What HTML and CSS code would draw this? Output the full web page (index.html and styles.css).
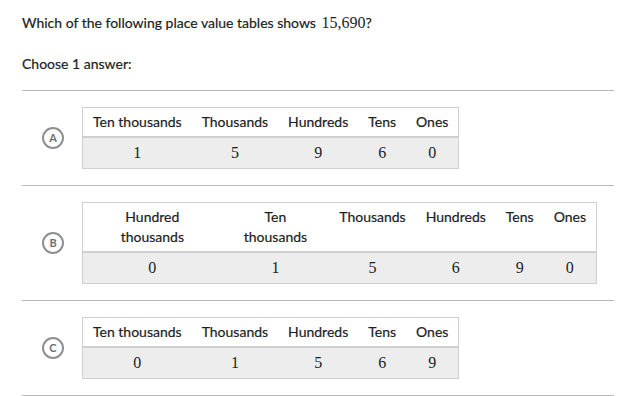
FILE: index.html
```html
<!DOCTYPE html>
<html lang="en">
<head>
  <meta charset="UTF-8">
  <title>Place value tables</title>
  <link rel="stylesheet" href="styles.css">
</head>
<body>
  <div class="exercise">
    <p class="question">Which of the following place value tables shows <span class="math">15,690</span>?</p>
    <p class="choose">Choose 1 answer:</p>

    <ul class="choices">
      <li class="choice">
        <span class="letter">A</span>
        <div class="table-wrap">
          <table class="place-table">
            <tr><th>Ten thousands</th><th>Thousands</th><th>Hundreds</th><th>Tens</th><th>Ones</th></tr>
            <tr><td>1</td><td>5</td><td>9</td><td>6</td><td>0</td></tr>
          </table>
        </div>
      </li>
      <li class="choice">
        <span class="letter">B</span>
        <div class="table-wrap">
          <table class="place-table">
            <tr><th>Hundred thousands</th><th>Ten thousands</th><th>Thousands</th><th>Hundreds</th><th>Tens</th><th>Ones</th></tr>
            <tr><td>0</td><td>1</td><td>5</td><td>6</td><td>9</td><td>0</td></tr>
          </table>
        </div>
      </li>
      <li class="choice">
        <span class="letter">C</span>
        <div class="table-wrap">
          <table class="place-table">
            <tr><th>Ten thousands</th><th>Thousands</th><th>Hundreds</th><th>Tens</th><th>Ones</th></tr>
            <tr><td>0</td><td>1</td><td>5</td><td>6</td><td>9</td></tr>
          </table>
        </div>
      </li>
    </ul>
  </div>
</body>
</html>
```

FILE: styles.css
```css
/* Page */
body {
  margin: 0;
  background: #fff;
  color: #1b1d23;
  font-family: Lato, "Open Sans", sans-serif;
  font-size: 14px;
}

.exercise {
  padding: 13px 14px 0 22px;
}

.question,
.choose {
  margin: 0;
  line-height: 20px;
  -webkit-text-stroke: 0.2px #1b1d23;
}

.choose {
  margin-top: 21px;
}

/* Math glyphs */
.math,
.place-table td {
  font-family: "Liberation Serif", "DejaVu Serif", serif;
  font-size: 16px;
  -webkit-text-stroke: 0;
}

.math {
  margin-left: 2px;
}

/* Answer list */
.choices {
  list-style: none;
  margin: 16px 0 0;
  padding: 0;
}

.choice {
  display: flex;
  align-items: center;
  border-top: 1px solid #bababa;
  padding: 16px 0;
}

.choice:last-child {
  border-bottom: 1px solid #bababa;
}

.letter {
  flex: none;
  width: 18px;
  height: 18px;
  margin: 0 18px 0 20px;
  border: 2px solid #8d8f92;
  border-radius: 50%;
  color: #6b6e73;
  font-size: 11px;
  font-weight: 700;
  line-height: 18px;
  text-align: center;
}

.table-wrap {
  max-width: 515px;
}

/* Place value table */
.place-table {
  border-collapse: collapse;
  border: 1px solid #cfcfcf;
}

.place-table th {
  padding: 4px 10px;
  line-height: 20px;
  font-weight: 400;
  vertical-align: top;
  text-align: center;
  border-bottom: 2px solid #cfcfcf;
  -webkit-text-stroke: 0.2px #1b1d23;
}

.place-table td {
  padding: 6px 10px;
  line-height: 18px;
  text-align: center;
  background: #ededed;
}
```
